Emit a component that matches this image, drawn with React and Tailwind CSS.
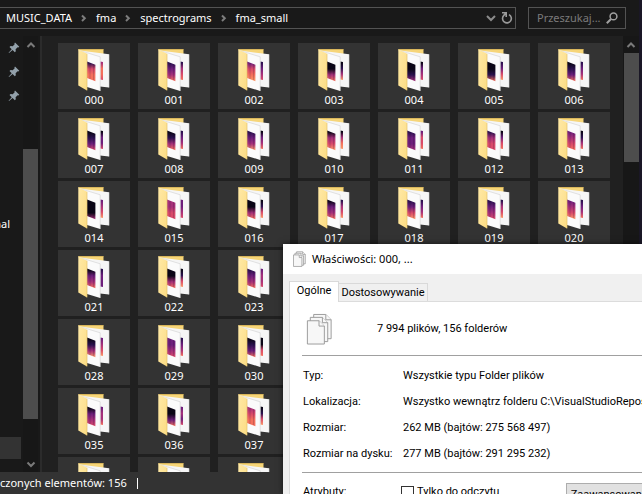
import React from 'react';

const K = '#0a0616';
const N = '#2b1250';
const P = '#6d1f7c';
const M = '#a6317a';
const R = '#d94a6a';
const O = '#f4705c';
const L = '#fb9a6a';

/* name, four gradient stops of the front sheet, four of the back sheet */
const folders = [
  ['000', [N, R, O, O], [M, O, O, R]],
  ['001', [N, P, M, O], [N, M, R, O]],
  ['002', [P, R, O, L], [N, P, M, R]],
  ['003', [K, K, M, O], [K, N, M, L]],
  ['004', [K, K, N, M], [K, P, M, R]],
  ['005', [K, K, N, O], [N, P, R, L]],
  ['006', [K, N, P, O], [N, P, M, O]],
  ['007', [K, N, P, R], [K, P, P, R]],
  ['008', [K, N, M, O], [N, P, M, O]],
  ['009', [N, P, M, L], [K, P, M, O]],
  ['010', [K, M, R, L], [K, M, O, L]],
  ['011', [N, P, P, M], [P, R, R, O]],
  ['012', [N, M, R, R], [K, P, R, O]],
  ['013', [P, M, R, O], [K, N, M, O]],
  ['014', [K, K, K, M], [P, M, R, L]],
  ['015', [M, M, R, R], [P, P, M, R]],
  ['016', [K, K, M, O], [K, N, R, L]],
  ['017', [K, P, M, O], [N, M, R, L]],
  ['018', [N, P, R, L], [N, P, M, O]],
  ['019', [N, P, M, R], [N, M, R, L]],
  ['020', [P, M, R, L], [N, P, M, O]],
  ['021', [K, P, M, O], [N, P, P, P]],
  ['022', [K, K, M, O], [K, N, R, L]],
  ['023', [N, P, M, O], [P, M, M, R]],
  ['024', [K, P, M, O], [N, P, M, R]],
  ['025', [K, P, M, O], [N, P, M, R]],
  ['026', [K, P, M, O], [N, P, M, R]],
  ['027', [K, P, M, O], [N, P, M, R]],
  ['028', [K, N, M, L], [P, M, R, L]],
  ['029', [P, P, M, R], [N, P, M, O]],
  ['030', [K, N, P, O], [K, K, R, O]],
  ['031', [K, P, M, O], [N, P, M, R]],
  ['032', [K, P, M, O], [N, P, M, R]],
  ['033', [K, P, M, O], [N, P, M, R]],
  ['034', [K, P, M, O], [N, P, M, R]],
  ['035', [K, P, M, R], [P, M, M, O]],
  ['036', [K, K, P, O], [P, M, P, R]],
  ['037', [M, R, O, O], [K, N, R, L]],
  ['038', [K, P, M, O], [N, P, M, R]],
  ['039', [K, P, M, O], [N, P, M, R]],
  ['040', [K, P, M, O], [N, P, M, R]],
  ['041', [K, P, M, O], [N, P, M, R]],
  ['042', [K, P, M, O], [N, P, M, R]],
  ['043', [K, P, M, O], [N, P, M, R]],
  ['044', [K, P, M, O], [N, P, M, R]],
];

function Gradient({ id, stops }) {
  return (
    <linearGradient id={id} x1="0" y1="0" x2="0" y2="1">
      {stops.map((color, i) => (
        <stop key={i} offset={[0.08, 0.38, 0.68, 1][i]} stopColor={color} />
      ))}
    </linearGradient>
  );
}

function FolderIcon({ name, front, back }) {
  return (
    <svg width="32" height="43" viewBox="0 0 32 43" aria-hidden="true" className="block">
      <defs>
        <Gradient id={`front${name}`} stops={front} />
        <Gradient id={`back${name}`} stops={back} />
        <linearGradient id={`cover${name}`} x1="0" y1="0" x2="1" y2="1">
          <stop offset="0" stopColor="#ffe9a6" />
          <stop offset="1" stopColor="#fcdc83" />
        </linearGradient>
      </defs>
      <path d="M0.5 0.5H25.5V36H9z" fill="#f6d578" />
      <path d="M0.5 0.5H25.5" stroke="#d9b65c" />
      <path d="M2 1.6L31 5.3V38.5L22 37.6L9 30z" fill="#f6f6f6" />
      <path d="M31 5.3V38.5" stroke="#d8d8d8" strokeWidth="0.6" />
      <path d="M22.3 12.4L25 13V31L22.3 30.6z" fill={`url(#back${name})`} />
      <path d="M2 1.6L22.2 7.8V42L9 38z" fill="#fbfbfb" />
      <path d="M2 1.6L22.2 7.8V42" fill="none" stroke="#d5d5d5" strokeWidth="0.7" />
      <path d="M9 12.4L17.4 15.8V32.2L9 29z" fill={`url(#front${name})`} />
      <path d="M12 14V30M15.5 15V31" stroke="#12061f" strokeOpacity="0.22" strokeWidth="0.8" />
      <path d="M0.3 0.3L9 4.8V41.4L0.3 36.6z" fill={`url(#cover${name})`} />
      <path d="M9 4.8V41.4" stroke="#e5c36b" strokeWidth="0.7" />
    </svg>
  );
}

function Tile({ folder }) {
  const [name, front, back] = folder;
  return (
    <button className="flex h-[66px] w-[72px] flex-col items-center bg-[#333333] pt-[6px] text-white">
      <FolderIcon name={name} front={front} back={back} />
      <span className="leading-4">{name}</span>
    </button>
  );
}

function Chevron({ className = '', d }) {
  return (
    <svg width="10" height="10" viewBox="0 0 10 10" fill="none" stroke="currentColor" strokeWidth="2" aria-hidden="true" className={className}>
      <path d={d} />
    </svg>
  );
}

function Pin() {
  return (
    <svg width="12" height="12" viewBox="0 0 12 12" aria-hidden="true" className="block">
      <path d="M7 0.5L11.3 4.8L10.3 5.4L9.6 5.2L7.6 7.3L7.8 9.3L6.8 10.3L4.6 8L1 11L0.6 10.7L3.7 7.2L1.5 5L2.6 4L4.7 4.2L6.7 2.3L6.4 1.4z" fill="#93a1ab" />
    </svg>
  );
}

const crumbs = ['MUSIC_DATA', 'fma', 'spectrograms', 'fma_small'];

function AddressBar() {
  return (
    <header className="flex h-9 shrink-0 items-start bg-[#191919] pt-[7px] pr-[13px]">
      <nav aria-label="Path" className="flex h-[22px] flex-1 items-center border-y border-r border-[#535353] pl-[6px] text-white">
        {crumbs.map((crumb, i) => (
          <React.Fragment key={crumb}>
            {i > 0 && <Chevron d="M3 2.5L5.8 5.3L3 8" className="mx-[7px] text-[#7d7d7d]" />}
            <button className="leading-4">{crumb}</button>
          </React.Fragment>
        ))}
        <button aria-label="History" className="mr-[3px] ml-auto text-[#8b8b8b]">
          <Chevron d="M1 3L5 7L9 3" />
        </button>
        <button aria-label="Refresh" className="flex h-5 w-4 items-center justify-center text-[#9a9a9a]">
          <svg width="12" height="14" viewBox="0 0 12 14" fill="none" stroke="currentColor" strokeWidth="1.6">
            <path d="M8 3.6A4.4 4.4 0 1 1 2.8 4.4L4.8 2.4M1 1.8H5.2V6" />
          </svg>
        </button>
      </nav>
      <label className="ml-3 flex h-[22px] w-[98px] items-center border border-[#535353] pr-[7px] pl-2">
        <input aria-label="Search" placeholder="Przeszukaj..." className="w-[68px] min-w-0 bg-transparent leading-4 outline-none placeholder:text-[#7b7b7b]" />
        <svg width="12" height="12" viewBox="0 0 12 12" fill="none" stroke="#a0a0a0" strokeWidth="1.5" className="ml-auto shrink-0">
          <circle cx="7.5" cy="4.4" r="3.4" />
          <path d="M5 7L0.8 11.2" strokeWidth="2" />
        </svg>
      </label>
    </header>
  );
}

const UP = 'M1.5 7L5 3.5L8.5 7';
const DOWN = 'M1.5 3.5L5 7L8.5 3.5';

function QuickAccess() {
  return (
    <aside className="flex w-[40px] shrink-0 bg-[#191919] text-white">
      <div className="w-[23px] overflow-hidden pt-[6px]">
        <div className="flex flex-col items-end gap-3 pr-[3px]">
          <Pin />
          <Pin />
          <Pin />
        </div>
        <div className="mt-[114px] flex h-4 justify-end pr-[13px] leading-4">
          <span>journal</span>
        </div>
        <div className="mt-[205px] mr-[2px] h-[22px] bg-[#333333]" />
      </div>
      <div className="flex w-[15px] flex-col items-center bg-[#171717] pt-[4px] pb-[3px] text-[#7a7a7a]">
        <Chevron d={UP} />
        <div className="mt-[99px] h-[270px] w-full bg-[#4d4d4d]" />
        <Chevron d={DOWN} className="mt-auto" />
      </div>
    </aside>
  );
}

function PagesIcon({ size }) {
  return (
    <svg width={size} height={Math.round(size * 1.2)} viewBox="0 0 27 33" aria-hidden="true" className="block">
      <g fill="#f7f7f7" stroke="#9b9b9b" strokeWidth={size < 20 ? 1.6 : 1}>
        <path d="M7.5 1.5H20L25.5 7V26.5H7.5z" />
        <path d="M20 1.5V7H25.5" />
        <path d="M4 4.5H16.5L22 10V29.5H4z" />
        <path d="M16.5 4.5V10H22" />
        <path d="M1 8H13L18.5 13.5V32H1z" />
        <path d="M13 8V13.5H18.5" />
      </g>
    </svg>
  );
}

const details = [
  ['Typ:', 'Wszystkie typu Folder plików'],
  ['Lokalizacja:', 'Wszystko wewnątrz folderu C:\\VisualStudioRepos\\'],
  ['Rozmiar:', '262 MB (bajtów: 275 568 497)'],
  ['Rozmiar na dysku:', '277 MB (bajtów: 291 295 232)'],
];

function PropertiesDialog() {
  return (
    <section
      role="dialog"
      aria-labelledby="dialog-title"
      className="absolute top-[244px] right-0 bottom-0 left-[283px] flex flex-col overflow-hidden bg-[#f0f0f0] text-black shadow-[0_0_6px_rgba(0,0,0,0.6)]"
    >
      <div className="flex h-[30px] shrink-0 items-center gap-[6px] bg-white pl-[10px]">
        <PagesIcon size={13} />
        <h1 id="dialog-title" className="leading-4">Właściwości: 000, ...</h1>
      </div>
      <div className="flex flex-1 flex-col pt-[7px] pl-[6px] font-[Roboto,sans-serif] leading-[14px]">
        <div role="tablist" className="flex h-5 shrink-0 items-end">
          <button role="tab" aria-selected="true" className="relative z-10 -mb-px h-[21px] w-[50px] border border-b-0 border-[#d9d9d9] bg-white pb-[2px]">
            Ogólne
          </button>
          <button role="tab" aria-selected="false" className="h-[18px] w-[89px] border border-b-0 border-l-0 border-[#d9d9d9] bg-[#f0f0f0]">
            Dostosowywanie
          </button>
        </div>
        <div role="tabpanel" className="flex-1 border-t border-l border-[#dcdcdc] bg-white pl-3">
          <div className="flex h-[54px] items-center border-b border-[#a0a0a0] pl-1">
            <PagesIcon size={27} />
            <p className="ml-11">7 994 plików, 156 folderów</p>
          </div>
          <dl className="flex h-[117px] flex-col gap-3 border-b border-[#a0a0a0] pt-[13px] pl-px whitespace-nowrap">
            {details.map(([label, value]) => (
              <div key={label} className="flex">
                <dt className="w-[100px] shrink-0">{label}</dt>
                <dd>{value}</dd>
              </div>
            ))}
          </dl>
          <div className="flex items-start pt-[10px] pl-px whitespace-nowrap">
            <span className="w-[98px] shrink-0 pt-[2px]">Atrybuty:</span>
            <label className="flex w-[165px] shrink-0 items-start gap-[3px] pt-[2px]">
              <input type="checkbox" className="mt-px h-[13px] w-[13px] shrink-0 appearance-none border border-[#333333] bg-white" />
              Tylko do odczytu
            </label>
            <button className="h-[23px] w-[95px] shrink-0 border border-[#adadad] bg-[#e1e1e1]">Zaawansowane...</button>
          </div>
        </div>
      </div>
    </section>
  );
}

export default function App() {
  return (
    <div className="relative h-screen overflow-hidden bg-[#1a1726] pr-[3px] font-['Noto_Sans',sans-serif] text-[11px]">
      <div className="flex h-full flex-col bg-[#202020]">
        <AddressBar />
        <div className="flex min-h-0 flex-1">
          <QuickAccess />
          <main className="flex-1 overflow-hidden border-l-2 border-[#2b2b2b] pt-[7px] pl-4">
            <div className="grid grid-cols-[repeat(7,72px)] gap-x-2 gap-y-[3px]">
              {folders.map((folder) => (
                <Tile key={folder[0]} folder={folder} />
              ))}
            </div>
          </main>
          <div className="flex w-4 shrink-0 flex-col items-center bg-[#171717] pt-[4px] text-[#7a7a7a]">
            <Chevron d={UP} />
            <div className="mt-[3px] h-[109px] w-[15px] bg-[#4d4d4d]" />
          </div>
        </div>
        <footer className="flex h-[22px] shrink-0 items-center bg-[#333333] text-white">
          <span>czonych elementów: 156</span>
          <span className="ml-[10px] h-[11px] w-px bg-white" />
        </footer>
      </div>
      <PropertiesDialog />
    </div>
  );
}
